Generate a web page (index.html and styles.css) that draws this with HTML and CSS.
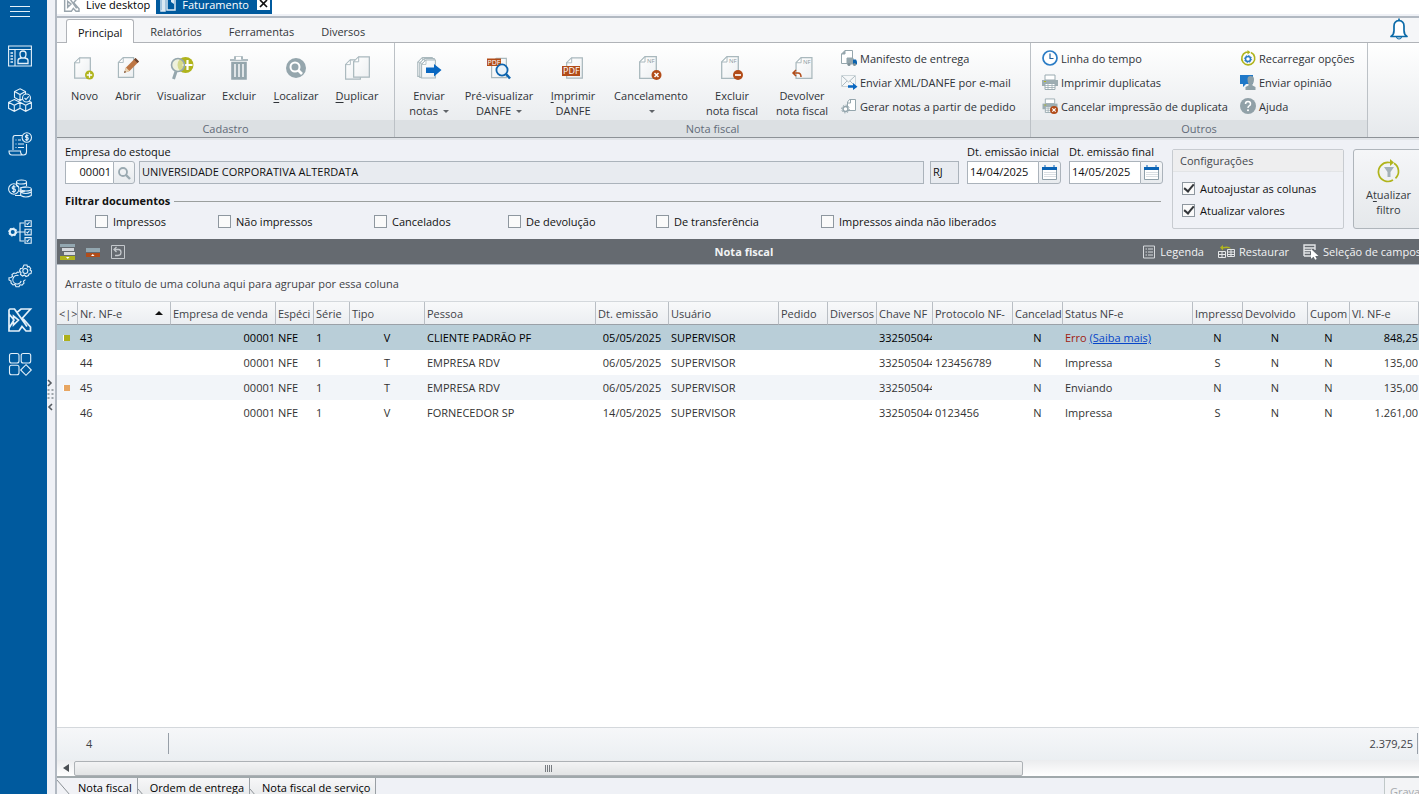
FILE: index.html
```html
<!DOCTYPE html>
<html lang="pt-BR">
<head>
<meta charset="utf-8">
<title>Faturamento</title>
<link rel="stylesheet" href="styles.css">
</head>
<body>
<svg class="defs" aria-hidden="true">
  <defs>
    <linearGradient id="sheet" x1="0" y1="0" x2="1" y2="1"><stop offset="0" stop-color="#fff"/><stop offset="1" stop-color="#eceff1"/></linearGradient>
    <symbol id="page" viewBox="0 0 18 23"><path d="M6 .7H17.3V22.3H.7V6z" fill="url(#sheet)" stroke="#a9b8bd" stroke-width="1.3"/><path d="M6 .7V6H.7z" fill="#fff" stroke="#a9b8bd"/></symbol>
    <symbol id="calendar" viewBox="0 0 15 15"><path d="M.5 2.500h14v12H.5z" fill="#fff" stroke="#8fa0aa"/><path d="M0 2h15v3H0z" fill="#0a63b5"/><path d="M3 0v2M12 0v2" stroke="#0a63b5" stroke-width="1"/><path d="M2.500 7.500h11M2.500 9.500h11M2.500 11.500h11" stroke="#b5bfc6" stroke-dasharray="1 1"/></symbol>
    <symbol id="printer" viewBox="0 0 16 16"><path d="M3 1h10v5H3z" fill="#fff" stroke="#9aabb1"/><path d="M0 6h16v6H0z" fill="#9dadb2"/><path d="M3 9.500h10v6H3z" fill="#fff" stroke="#9aabb1"/><path d="M3 11.500h10M3 13.500h10M6 10v5M10 10v5" stroke="#9aabb1" stroke-width=".8"/><path d="M2 7h2v1H2z" fill="#b0b41c"/></symbol>
  </defs>
</svg>
<div class="app">
  <nav class="sidebar" aria-label="Módulos">
    <button class="side-btn menu" aria-label="Menu"><svg width="20" height="12" viewBox="0 0 20 12"><path d="M0 .5h20M0 5.500h20M0 10.500h20"/></svg></button>
    <button class="side-btn" aria-label="Clientes"><svg width="24" height="24" viewBox="0 0 24 24"><path d="M.6 2h22.800v20H.6zM.6 5.500h22.800M7 6v16"/><path d="M2.500 9h2.500M2.500 12h2.500M2.500 15h2.500M2.500 18h2.500M10 19.500v-3q0-2 3-2.500h4q3 .5 3 2.500v3zM12 10q0-3 3-3t3 3q0 4-3 4t-3-4z" stroke-width="1.300"/></svg></button>
    <button class="side-btn" aria-label="Estoque"><svg width="24" height="24" viewBox="0 0 24 24"><path d="M12 .8l5.500 2.700v6L12 12.500 6.500 9.500v-6zM6.500 3.500L12 6.500l5.500-3M12 6.500v6M6.300 11.500l5.700 2.800v6l-5.700 3-5.700-3v-6zM.6 14.300l5.700 3 5.700-3M6.300 17.300v6M17.700 11.500l5.700 2.800v6l-5.700 3-5.700-3M12 14.300l5.700 3 5.700-3M17.700 17.300v6"/><circle cx="18.500" cy="10" r="4" fill="#005a9e"/><path d="M16.500 10l1.500 1.500 2.800-3.200"/></svg></button>
    <button class="side-btn" aria-label="Notas"><svg width="24" height="24" viewBox="0 0 24 24"><path d="M14 3.500H7q-2 0-2 2.500v12M18.500 12v8q0 3-3 3H4q-3 0-3-4h11.500q0 4 3 4"/><circle cx="18.800" cy="5.500" r="4.700"/><path d="M20.500 3.800q-3-1-3 .5t1.500 1.200 1.200 1.500-3 .5M18.800 2v7M7.500 8h1M10 8h3M7.500 12h1M10 12h6M7.500 15.500h1M10 15.500h6"/></svg></button>
    <button class="side-btn" aria-label="Financeiro"><svg width="24" height="24" viewBox="0 0 24 24"><circle cx="5.800" cy="13" r="5.200"/><path d="M7.500 11q-3-1-3.300.4t1.700 1.500 1.400 2-3.300.4M5.800 9v8"/><ellipse cx="13.500" cy="6" rx="5" ry="2"/><path d="M8.500 6v3M18.500 6v4M12 12q2-1 6.500-1M11 15q3 1 6 0"/><ellipse cx="18" cy="13" rx="5.300" ry="2"/><path d="M12.700 13v6.500q5 3 10.600 0V13M12.700 16q5 3 10.600 0M11 11q-3-1-2.500-2M7 19.500h6"/></svg></button>
    <button class="side-btn" aria-label="Processos"><svg width="24" height="24" viewBox="0 0 24 24"><circle cx="4.700" cy="12" r="3" stroke-width="2"/><circle cx="4.700" cy="12" r="4" stroke-dasharray="1.500 1.600"/><path d="M9 12h8M16 3h-4v18h4"/><path d="M17 .8h6.200v5.700H17zM17 9.200h6.200v5.700H17zM17 17.600h6.200v5.700H17zM18.500 3.500l1 1 2-2.500M18.500 12l1 1 2-2.500M18.500 20.500l1 1 2-2.500"/></svg></button>
    <button class="side-btn" aria-label="Configurações"><svg width="24" height="24" viewBox="0 0 24 24"><path d="M16 1h3l.5 2 1.500-.5 1.700 2L22 6l1.500 1-.5 2.500-2 .5-.5 1.500-2.500 1-1.500-1.500-2 1-2-1.500.5-2-1.500-1.500 1-2.500 2-.3z"/><circle cx="17.300" cy="7" r="2.500"/><path d="M11.500 8.500L9.500 8 8 9.500 6 9 4 10.500l.5 2-1.500 1-2 .3V16l2 1v2l2 2 2-.5 1 2.300h3l1-2 2 .3 2-2-.5-2 2-1.500" /><path d="M10.500 11.500a4.300 4.300 0 1 0 2.700 5.500"/></svg></button>
    <button class="side-btn" aria-label="Live desktop"><svg width="24" height="24" viewBox="0 0 24 24"><path d="M2 1h4.500l2.500 3.500L13 1h9.500l-8 9 8 9v4H18l-4-4.500-3 4.500H1V2zM1 6l5 6-5 8M5.500 8v9l5-5zM9 4.500l10 14" stroke-width="1.700"/></svg></button>
    <button class="side-btn" aria-label="Aplicativos"><svg width="24" height="24" viewBox="0 0 24 24"><rect x="1.500" y="1.500" width="9.500" height="9.500" rx="2"/><rect x="13.200" y="1.500" width="9.500" height="9.500" rx="2"/><rect x="1.500" y="13.200" width="9.500" height="9.500" rx="2"/><path d="M18 12.700l5.300 5.300-5.300 5.300-5.300-5.300z"/></svg></button>
  </nav>

  <div class="splitter" aria-hidden="true"><svg width="7" height="34" viewBox="0 0 7 34"><path d="M1 2l3 3-3 3M5 26l-3 3 3 3" fill="none" stroke="#555a60" stroke-width="1.600"/><path d="M1.500 11v12M5.500 11v12" stroke="#9ea5aa" stroke-width="2" stroke-dasharray="2 2"/></svg></div>

  <main class="main">
    <header class="windows">
      <button class="win"><svg width="16" height="16" viewBox="0 0 24 24"><path d="M2 1h5l2 3.500L13 1h9l-7.500 9 8 9v4H18l-4-4.500-3 4.500H1V2zM5.500 8v9l5-5zM9 4.500l10 14" fill="none" stroke="#9aa5ad" stroke-width="2.200"/></svg>Live desktop</button>
      <button class="win current"><svg width="16" height="16" viewBox="0 0 16 16"><path d="M1 0v15h4V1M7 14V4q0-2 2-2h6v12z" fill="none" stroke="#dbe9f3" stroke-width="1.500"/><path d="M2 3h3v12H2zM11 1v5l3 2V1z" fill="#dbe9f3"/></svg>Faturamento</button>
      <button class="win-close" aria-label="Fechar Faturamento"><svg width="13" height="13" viewBox="0 0 13 13"><path d="M3 3l7 7M10 3l-7 7" stroke="#111" stroke-width="1.700"/></svg></button>
    </header>

    <nav class="ribbon-tabs">
      <button class="rtab active">Principal</button>
      <button class="rtab">Relatórios</button>
      <button class="rtab">Ferramentas</button>
      <button class="rtab">Diversos</button>
      <button class="bell" aria-label="Notificações"><svg width="18" height="22" viewBox="0 0 18 22"><path d="M9 .5v2M1 18.500q3-2 3-6V8q0-5 5-5.500Q14 3 14 8v4.500q0 4 3 6z" fill="#fff" stroke="#0b6aa8" stroke-width="1.700" stroke-linejoin="round"/><path d="M6.500 19q0 2 2.500 2t2.500-2z" fill="#fff" stroke="#0b6aa8"/></svg></button>
    </nav>

    <section class="ribbon">
      <div class="group">
        <div class="group-body first">
          <button class="big"><svg width="24" height="24" viewBox="0 0 24 24"><use href="#page" x="1" y="1" width="17" height="22"/><circle cx="16.500" cy="19" r="4.500" fill="#b0b41c"/><path d="M16.500 16.300v5.400M13.800 19h5.400" stroke="#fff" stroke-width="1.300"/></svg><span>Novo</span></button>
          <button class="big"><svg width="24" height="24" viewBox="0 0 24 24"><use href="#page" x="1" y="1" width="18" height="21"/><path d="M8 17l2-5.500L19.500 2 23 5.500 13.500 15z" fill="#bd7644"/><path d="M8 17l2-5.500 3.500 3.500z" fill="#ead3b1"/><path d="M8 17l.8-2.200 1.300 1.300zM18 3.500L19.500 2 23 5.500 21.500 7z" fill="#6b4430"/></svg><span>Abrir</span></button>
          <button class="big"><svg width="24" height="24" viewBox="0 0 24 24"><circle cx="15.500" cy="9" r="8" fill="#b0b41c"/><path d="M17.500 4v10M12.500 9h10" stroke="#fff" stroke-width="2.200"/><circle cx="8" cy="9" r="6.500" fill="#e9eccb" fill-opacity=".65" stroke="#95a6ad" stroke-width="1.600"/><path d="M6 15.500L3.500 23" stroke="#95a6ad" stroke-width="3"/></svg><span>Visualizar</span></button>
          <button class="big"><svg width="24" height="24" viewBox="0 0 24 24"><path d="M8 3V1h7v2M3 4h18M5 6.500h14V23H5z" fill="#95a6ad" stroke="#95a6ad" stroke-width="1.600"/><path d="M9.500 1.500h4V3h-4zM8 8v13M12 8v13M16 8v13" stroke="#fff" stroke-width="1.400"/></svg><span>Excluir</span></button>
          <button class="big"><svg width="24" height="24" viewBox="0 0 24 24"><circle cx="12" cy="12" r="10" fill="#95a6ad"/><circle cx="11" cy="11" r="4.500" fill="none" stroke="#fff" stroke-width="2"/><path d="M14 14l4 4" stroke="#fff" stroke-width="2.600"/></svg><span><u>L</u>ocalizar</span></button>
          <button class="big"><svg width="24" height="24" viewBox="0 0 24 24"><use href="#page" x="0" y="3" width="16" height="21"/><use href="#page" x="8" y="0" width="17" height="22"/></svg><span><u>D</u>uplicar</span></button>
        </div>
        <h2 class="group-title">Cadastro</h2>
      </div>
      <div class="group">
        <div class="group-body second">
          <button class="big"><svg width="24" height="24" viewBox="0 0 24 24"><use href="#page" x="0" y="1" width="16" height="20"/><use href="#page" x="2" y="2" width="16" height="20"/><use href="#page" x="4" y="3" width="15" height="20"/><path d="M9 11.500h8V8l7.500 6-7.500 6.500V17H9z" fill="#0967c1"/></svg><span>Enviar<br>notas <i class="caret"></i></span></button>
          <button class="big"><svg width="24" height="24" viewBox="0 0 24 24"><use href="#page" x="4" y="1" width="16" height="22"/><path d="M0 2.500h14V10H0z" fill="#b24c19"/><text x="0.500" y="9" font-size="7" fill="#fff">PDF</text><circle cx="15" cy="14" r="5.600" fill="#e8f2fa" fill-opacity=".9" stroke="#0b63ae" stroke-width="1.800"/><path d="M19 18l4 4.500" stroke="#0b63ae" stroke-width="2.500"/></svg><span>Pré-visualizar<br>DANFE <i class="caret"></i></span></button>
          <button class="big"><svg width="24" height="24" viewBox="0 0 24 24"><use href="#page" x="5" y="1" width="17" height="22"/><path d="M1 10h18v10H1z" fill="#b24c19"/><text x="2" y="18" font-size="9" fill="#fff">PDF</text></svg><span><u>I</u>mprimir<br>DANFE</span></button>
          <button class="big"><svg width="24" height="24" viewBox="0 0 24 24"><use href="#page" x="0" y="0" width="18" height="23"/><text x="8" y="7" font-size="6" fill="#8d9aa1">NF</text><circle cx="17.500" cy="19" r="5" fill="#b24c19"/><path d="M15.500 17l4 4M19.500 17l-4 4" stroke="#fff" stroke-width="1.500"/></svg><span>Cancelamento<br><i class="caret"></i></span></button>
          <button class="big"><svg width="24" height="24" viewBox="0 0 24 24"><use href="#page" x="1" y="0" width="18" height="23"/><text x="9" y="7" font-size="6" fill="#8d9aa1">NF</text><circle cx="18" cy="19" r="5" fill="#b24c19"/><path d="M15 19h6" stroke="#fff" stroke-width="1.700"/></svg><span>Excluir<br>nota fiscal</span></button>
          <button class="big"><svg width="24" height="24" viewBox="0 0 24 24"><use href="#page" x="5" y="1" width="18" height="22"/><text x="13" y="8" font-size="6" fill="#8d9aa1">NF</text><path d="M6 14l-3 3 3 3M3 17h5q3 0 3 4" fill="none" stroke="#b24c19" stroke-width="1.500"/></svg><span>Devolver<br>nota fiscal</span></button>
          <div class="stack">
            <button class="small"><svg width="16" height="16" viewBox="0 0 16 16"><path d="M4 .5h7.500v13H.5V4z" fill="#fff" stroke="#95a6ad"/><path d="M4 .5V4H.5M6 8h6v6H6z" fill="#95a6ad" stroke="#95a6ad"/><path d="M12 9.500h3l1 2v3h-4z" fill="#0b63ae"/><circle cx="8" cy="14.500" r="1.500" fill="#7f9097"/><circle cx="13.500" cy="14.500" r="1.500" fill="#7f9097"/></svg>Manifesto de entrega</button>
            <button class="small"><svg width="16" height="16" viewBox="0 0 16 16"><path d="M.5 1.500h14v11H.5z" fill="#f5f7f8" stroke="#ccd5d9"/><path d="M1 2l6.500 6L14 2M1 12l5-5M14 12L9 7" fill="none" stroke="#aebbc1"/><path d="M7 11.300h5V9l4.500 3.700L12 16v-2.300H7z" fill="#0967c1"/></svg>Enviar XML/DANFE por e-mail</button>
            <button class="small"><svg width="16" height="16" viewBox="0 0 16 16"><path d="M8.500 1.500h6v11h-8V4z" fill="#fff" stroke="#95a6ad"/><path d="M9.500 1.500V5h-3" fill="none" stroke="#95a6ad"/><circle cx="4.500" cy="11" r="2.500" fill="#fff" stroke="#95a6ad" stroke-width="1.500"/><circle cx="4.500" cy="11" r="3.900" fill="none" stroke="#95a6ad" stroke-dasharray="1.500 1.500"/></svg>Gerar notas a partir de pedido</button>
          </div>
        </div>
        <h2 class="group-title">Nota fiscal</h2>
      </div>
      <div class="group">
        <div class="group-body third">
          <div class="stack">
            <button class="small"><svg width="16" height="16" viewBox="0 0 16 16"><circle cx="8" cy="8" r="7" fill="#fff" stroke="#2b7cc5" stroke-width="1.700"/><path d="M8 3.500V8.500h3.500" fill="none" stroke="#1e609e" stroke-width="1.200"/></svg>Linha do tempo</button>
            <button class="small"><svg width="16" height="16"><use href="#printer"/></svg>Imprimir duplicatas</button>
            <button class="small"><svg width="16" height="16" viewBox="0 0 16 16"><use href="#printer" width="16" height="15"/><circle cx="12" cy="12" r="4" fill="#b24c19"/><path d="M10.300 10.300l3.400 3.400M13.700 10.300l-3.400 3.400" stroke="#fff" stroke-width="1.200"/></svg>Cancelar impressão de duplicata</button>
          </div>
          <div class="stack">
            <button class="small"><svg width="16" height="16" viewBox="0 0 16 16"><path d="M11 2.500a6.500 6.500 0 1 1-5-.2h3" fill="none" stroke="#b0b41c" stroke-width="1.600"/><path d="M7.500 0l3 2.300-3 2.300z" fill="#b0b41c"/><circle cx="8" cy="9" r="2.500" fill="#fff" stroke="#2b7cc5" stroke-width="1.500"/><circle cx="8" cy="9" r="3.600" fill="none" stroke="#2b7cc5" stroke-dasharray="1.300 1.500"/></svg>Recarregar opções</button>
            <button class="small"><svg width="16" height="16" viewBox="0 0 16 16"><path d="M0 1h13v9H6l-3 3v-3H0z" fill="#1f78c8"/><path d="M7.500 5q0-3 3.200-3T14 5q0 4-1.500 5v1.500l3 1.500v3h-10v-3l3-1.500V10Q7.500 9 7.500 5z" fill="#8da0a8"/></svg>Enviar opinião</button>
            <button class="small"><svg width="16" height="16" viewBox="0 0 16 16"><circle cx="8" cy="8" r="8" fill="#91a1a8"/><path d="M5.500 6q0-2.500 2.500-2.500T10.500 6q0 1.200-1.300 1.900T8 10" fill="none" stroke="#fff" stroke-width="1.500"/><circle cx="8" cy="12.300" r="1" fill="#fff"/></svg>Ajuda</button>
          </div>
        </div>
        <h2 class="group-title">Outros</h2>
      </div>
    </section>

    <section class="filters">
      <div class="fields">
        <div class="field-row">
          <div class="field">
            <label for="code">Empresa do estoque</label>
            <div class="combo code"><input id="code" type="text" value="00001"><button aria-label="Pesquisar empresa"><svg width="14" height="14" viewBox="0 0 14 14"><circle cx="6" cy="6" r="4" fill="none" stroke="#9aa9b1" stroke-width="1.800"/><path d="M9 9l4 4" stroke="#9aa9b1" stroke-width="2.400"/></svg></button></div>
          </div>
          <input class="readonly name" type="text" value="UNIVERSIDADE CORPORATIVA ALTERDATA" aria-label="Nome da empresa" readonly>
          <input class="readonly uf" type="text" value="RJ" aria-label="UF" readonly>
          <div class="field">
            <label for="from">Dt. emissão inicial</label>
            <div class="combo date"><input id="from" type="text" value="14/04/2025"><button aria-label="Abrir calendário inicial"><svg width="15" height="15"><use href="#calendar"/></svg></button></div>
          </div>
          <div class="field">
            <label for="to">Dt. emissão final</label>
            <div class="combo date"><input id="to" type="text" value="14/05/2025"><button aria-label="Abrir calendário final"><svg width="15" height="15"><use href="#calendar"/></svg></button></div>
          </div>
        </div>
        <fieldset class="docs">
          <legend>Filtrar documentos</legend>
          <label class="check"><input type="checkbox">Impressos</label>
          <label class="check"><input type="checkbox">Não impressos</label>
          <label class="check"><input type="checkbox">Cancelados</label>
          <label class="check"><input type="checkbox">De devolução</label>
          <label class="check"><input type="checkbox">De transferência</label>
          <label class="check"><input type="checkbox">Impressos ainda não liberados</label>
        </fieldset>
      </div>
      <div class="config">
        <h3>Configurações</h3>
        <label class="check"><input type="checkbox" checked>Autoajustar as colunas</label>
        <label class="check"><input type="checkbox" checked>Atualizar valores</label>
      </div>
      <button class="refresh"><svg width="24" height="24" viewBox="0 0 24 24"><path d="M17 4.300a9.500 9.500 0 0 1 1.500 15M16 21a9.500 9.500 0 1 1-4-17.500h3" fill="none" stroke="#b0b41c" stroke-width="1.700"/><path d="M13 0l4 3.500-4 3.500z" fill="#b0b41c"/><path d="M7 8h10l-3.500 5v5h-3v-5z" fill="#a4b1b7"/></svg><span>A<u>t</u>ualizar<br>filtro</span></button>
    </section>

    <div class="grid-bar">
      <div class="bar-left">
        <button aria-label="Expandir"><svg width="16" height="16" viewBox="0 0 16 16"><path d="M0 0h15v3H0z" fill="#93a7b0"/><path d="M2 4h12v3H2zM4 8h11v3H4z" fill="#d5d8dc"/><path d="M0 12h15v4H0z" fill="#b0b41c"/><path d="M6 13h3.500L7.800 15z" fill="#fff"/></svg></button>
        <button aria-label="Recolher"><svg width="16" height="16" viewBox="0 0 16 16"><path d="M1 4h14v4H1z" fill="#93a7b0"/><path d="M1 9h14v4H1z" fill="#b24c19"/><path d="M6 12h3.500L7.800 10z" fill="#fff"/></svg></button>
        <button aria-label="Desfazer"><svg width="16" height="16" viewBox="0 0 16 16"><path d="M1.500 1.500h13v13h-13z" fill="none" stroke="#c4c8cc"/><path d="M6.500 3L4 5.500 6.500 8M4 5.500h4.500q2.500 0 2.500 3T8 11.500H5" fill="none" stroke="#c4c8cc" stroke-width="1.300"/></svg></button>
      </div>
      <h2>Nota fiscal</h2>
      <div class="bar-right">
        <button><svg width="14" height="14" viewBox="0 0 14 14"><path d="M1.500 1h11v12h-11z" fill="none" stroke="#d6d9dc"/><path d="M3.500 4h1.500M6 4h5M3.500 7h1.500M6 7h5M3.500 10h1.500M6 10h5" stroke="#d6d9dc"/></svg>Legenda</button>
        <button><svg width="17" height="14" viewBox="0 0 17 14"><path d="M.5 6.500h7v6h-7zM.5 9.500h7M4 6.500v6M9.500 4.500h7v7h-7zM9.500 7h7M9.500 9.500h7M13 4.500v7" fill="none" stroke="#e4e6e8"/><path d="M2 2.500L5 0v2q6-1.500 8 1.500-4-1-8 0v2z" fill="#b0b41c"/></svg>Restaurar</button>
        <button><svg width="16" height="16" viewBox="0 0 16 16"><path d="M1 1h11v3H1zM1 6.500h8M1 9h6M1 12h8M1 1v11M12 1v5" fill="none" stroke="#e4e6e8" stroke-width="1.400"/><path d="M8 5l7.500 7h-3.300l1.500 3-1.600.8-1.500-3L8 14.800z" fill="#fff"/></svg>Seleção de campos</button>
      </div>
    </div>

    <p class="group-hint">Arraste o título de uma coluna aqui para agrupar por essa coluna</p>

    <div class="grid-area">
      <table class="grid">
        <colgroup>
          <col class="w-flag"><col class="w-nr"><col class="w-emp"><col class="w-esp"><col class="w-serie"><col class="w-tipo"><col class="w-pessoa"><col class="w-dt"><col class="w-user"><col class="w-49"><col class="w-49"><col class="w-chave"><col class="w-prot"><col class="w-50"><col class="w-status"><col class="w-50"><col class="w-dev"><col class="w-cupom"><col>
        </colgroup>
        <thead>
          <tr><th>&lt;|&gt;</th><th><span class="sorted">Nr. NF-e</span></th><th>Empresa de venda</th><th>Espéci</th><th>Série</th><th>Tipo</th><th>Pessoa</th><th>Dt. emissão</th><th>Usuário</th><th>Pedido</th><th>Diversos</th><th>Chave NF</th><th>Protocolo NF-</th><th>Cancelad</th><th>Status NF-e</th><th>Impresso</th><th>Devolvido</th><th>Cupom</th><th>Vl. NF-e</th></tr>
        </thead>
        <tbody>
          <tr class="selected"><td><i class="flag green"></i></td><td>43</td><td class="r">00001</td><td>NFE</td><td>1</td><td class="c">V</td><td>CLIENTE PADRÃO PF</td><td class="c">05/05/2025</td><td>SUPERVISOR</td><td></td><td></td><td>332505044</td><td></td><td class="c">N</td><td><span class="error">Erro</span> <a href="#">(Saiba mais)</a></td><td class="c">N</td><td class="c">N</td><td class="c">N</td><td class="r">848,25</td></tr>
          <tr><td></td><td>44</td><td class="r">00001</td><td>NFE</td><td>1</td><td class="c">T</td><td>EMPRESA RDV</td><td class="c">06/05/2025</td><td>SUPERVISOR</td><td></td><td></td><td>332505044</td><td>123456789</td><td class="c">N</td><td>Impressa</td><td class="c">S</td><td class="c">N</td><td class="c">N</td><td class="r">135,00</td></tr>
          <tr class="alt"><td><i class="flag orange"></i></td><td>45</td><td class="r">00001</td><td>NFE</td><td>1</td><td class="c">T</td><td>EMPRESA RDV</td><td class="c">06/05/2025</td><td>SUPERVISOR</td><td></td><td></td><td>332505044</td><td></td><td class="c">N</td><td>Enviando</td><td class="c">N</td><td class="c">N</td><td class="c">N</td><td class="r">135,00</td></tr>
          <tr><td></td><td>46</td><td class="r">00001</td><td>NFE</td><td>1</td><td class="c">V</td><td>FORNECEDOR SP</td><td class="c">14/05/2025</td><td>SUPERVISOR</td><td></td><td></td><td>332505044</td><td>0123456</td><td class="c">N</td><td>Impressa</td><td class="c">S</td><td class="c">N</td><td class="c">N</td><td class="r">1.261,00</td></tr>
        </tbody>
      </table>
    </div>

    <div class="totals"><span class="count">4</span><span class="sum">2.379,25</span></div>
    <div class="scroll" aria-hidden="true"><i class="arrow"></i><div class="thumb"><i></i></div></div>

    <footer class="bottom">
      <button class="btab active"><svg width="13" height="15" viewBox="0 0 13 15"><path d="M0 0l13 15"/></svg>Nota fiscal</button>
      <button class="btab"><svg width="7" height="15" viewBox="0 0 7 15"><path d="M0 9l6 7"/></svg>Ordem de entrega</button>
      <button class="btab"><svg width="7" height="15" viewBox="0 0 7 15"><path d="M0 9l6 7"/></svg>Nota fiscal de serviço</button>
      <button class="save" disabled>Gravar</button>
    </footer>
  </main>
</div>
</body>
</html>
```
FILE: styles.css
```css
* { box-sizing: border-box; }
body {
  margin: 0;
  font: 11px/15px "Open Sans", "Noto Sans", sans-serif;
  color: #111;
  background: #eff1f6;
  overflow: hidden;
}
button, input { font: inherit; color: inherit; }
button { margin: 0; padding: 0; border: 0; background: none; }
h2, h3, p { margin: 0; font: inherit; }
svg { flex: none; overflow: visible; }
.defs { position: absolute; width: 0; height: 0; }
u { text-underline-offset: 2px; }

.app { display: flex; height: 100vh; }

.sidebar { flex: none; width: 47px; padding-right: 7px; background: #005a9e; overflow: hidden; }
.side-btn { display: flex; align-items: center; justify-content: center; width: 100%; height: 44px; }
.side-btn svg { fill: none; stroke: #e3f0f9; stroke-width: 1.1; }
.side-btn.menu { height: 34px; padding-bottom: 10px; }

.splitter { flex: none; display: flex; align-items: center; width: 8px; padding-bottom: 5px; }

.main { flex: 1; min-width: 0; display: flex; flex-direction: column; border-left: 2px solid #b2b9c2; overflow: hidden; }

.windows { flex: none; display: flex; align-items: flex-end; height: 14px; padding-left: 7px; background: #fff; color: #000; }
.win { display: flex; align-items: center; gap: 6px; height: 20px; padding-right: 6px; }
.win.current { padding: 0 8px 0 4px; background: #005a9e; color: #fff; }
.win-close { height: 20px; padding: 3px 2px 4px 0; background: #005a9e; }
.win-close svg { display: block; background: #fff; }

.ribbon-tabs { flex: none; display: flex; align-items: flex-end; gap: 1px; height: 29px; padding-left: 9px; border-top: 2px solid #eff1f6; background: linear-gradient(#b2b9c2 2px, #f5f6f8 2px); border-bottom: 1px solid #b0b3b8; color: #33363b; }
.rtab { height: 22px; padding: 0 13px; }
.rtab.active { height: 24px; margin-bottom: -1px; margin-right: 2px; padding: 1px 11px 0; border: 1px solid #b0b3b8; border-bottom: 0; border-radius: 3px 3px 0 0; background: #fff; color: #111; }
.bell { margin: 0 11px 2px auto; }
.bell svg { display: block; }

.ribbon { flex: none; display: flex; height: 95px; border-bottom: 1px solid #8d9297; background: linear-gradient(#fff, #e6e9ec); color: #2f3338; }
.group { display: flex; flex-direction: column; border-right: 1px solid #bcc1c6; }
.group-body { flex: 1; display: grid; padding-left: 6px; }
.first { grid-template-columns: 43px 44px 63px 52px 62px 60px; padding-right: 7px; }
.second { grid-template-columns: 58px 82px 66px 90px 72px 68px 194px; padding-left: 5px; }
.third { grid-template-columns: 198px 127px; padding-left: 11px; }
.group-title { height: 17px; line-height: 17px; text-align: center; background: #dce0e3; color: #626b78; }
.big { display: flex; flex-direction: column; align-items: center; gap: 8px; padding-top: 13px; white-space: nowrap; }
.caret { display: inline-block; margin: 0 0 2px 2px; border: 3px solid transparent; border-top-color: #606469; border-bottom: 0; }
.stack { display: grid; grid-template-rows: repeat(3, 24px); padding: 3px 0 0 5px; white-space: nowrap; }
.third .stack { padding-left: 0; }
.small { display: flex; align-items: center; gap: 3px; text-align: left; }

.filters { flex: none; display: grid; grid-template-columns: 1fr 172px 75px; height: 101px; padding: 10px 0 10px 8px; border-top: 2px solid #e2e5e9; }
.fields { display: flex; flex-direction: column; }
.field-row { display: flex; align-items: flex-end; gap: 6px; padding-right: 9px; height: 34px; }
.field { width: 70px; display: flex; flex-direction: column; gap: 1px; white-space: nowrap; }
.field:nth-last-child(-n+2) { width: 94px; margin-left: 2px; }
.field label { line-height: 16px; }
.combo { display: flex; }
.combo input { width: 48px; height: 23px; padding: 0 2px 2px; border: 1px solid #abb3bb; border-right: 0; background: #fff; text-align: right; }
.combo.date input { width: 71px; text-align: left; }
.combo button { display: flex; align-items: center; justify-content: center; width: 23px; height: 23px; border: 1px solid #abb3bb; border-radius: 0 3px 3px 0; background: linear-gradient(#f6f7f9, #e8ebee); }
.readonly { height: 23px; border: 1px solid #abb3bb; padding: 0 2px 2px; background: #e8ebf0; }
.name { flex: 1; min-width: 0; margin-left: -2px; }
.uf { width: 29px; }
.docs { display: grid; grid-template-columns: 123px 156px 134px 148px 165px auto; align-items: center; min-width: 0; margin: 9px 11px 0 0; padding: 6px 0 0 30px; border: 0; background: linear-gradient(#9b9f9e, #9b9f9e) 0 0 / 100% 1px no-repeat; }
.docs legend { margin-left: -30px; padding: 0 4px 0 0; font-weight: 700; background: #eff1f6; }
.check { display: flex; align-items: center; gap: 5px; white-space: nowrap; }
.check input { appearance: none; display: grid; place-items: center; width: 13px; height: 13px; margin: 0; border: 1px solid #8e979f; background: #fafafa; }
.check input:checked::after { content: ""; width: 4px; height: 8px; margin-top: -2px; border: solid #33363a; border-width: 0 2px 2px 0; transform: rotate(40deg); }
.config { height: 80px; margin-top: -1px; border: 1px solid #c7cbd0; border-radius: 2px; }
.config h3 { height: 22px; padding: 3px 7px; background: #eeeeef; border-bottom: 1px solid #e2e4e6; color: #44484e; }
.config .check { height: 22px; padding-left: 9px; }
.config h3 + .check { margin-top: 5px; }
.refresh { display: flex; flex-direction: column; align-items: center; gap: 4px; width: 71px; height: 80px; margin: -1px 0 0 9px; padding-top: 9px; border: 1px solid #afb5bb; border-radius: 3px; background: linear-gradient(#f5f6f8, #e5e8eb); color: #373b40; }

.grid-bar { flex: none; display: grid; grid-template-columns: 1fr auto 1fr; align-items: center; height: 26px; margin-right: -12px; border-bottom: 1px solid #b2b9c2; background: #656a70; color: #f2f3f4; white-space: nowrap; }
.grid-bar h2 { font-weight: 700; }
.grid-bar button { display: flex; align-items: center; gap: 4px; }
.bar-left { display: flex; gap: 9px; padding-left: 3px; }
.bar-right { display: flex; justify-content: flex-end; gap: 14px; padding-right: 10px; }

.group-hint { flex: none; height: 37px; padding: 11px 8px; background: #f5f6f8; border-bottom: 1px solid #d4d8dc; color: #3f4247; }

.grid-area { flex: 1; min-height: 0; overflow: hidden; background: #fff; }
.grid { width: 100%; table-layout: fixed; border-collapse: separate; border-spacing: 0; color: #333; }
.grid th, .grid td { padding: 0 2px; overflow: hidden; white-space: nowrap; text-align: left; font-weight: 400; }
.grid th { height: 23px; border-right: 1px solid #b9bec4; border-bottom: 1px solid #9ba1a8; background: linear-gradient(#f8f9fa, #ebeef1); color: #3f4247; }
.grid td { height: 25px; border-right: 1px solid transparent; }
.grid td.r { text-align: right; padding-right: 0; }
.grid td.c { text-align: center; }
.grid .selected { background: #b9ced8; color: #000; }
.grid .alt { background: #f2f5f9; }
.sorted { display: flex; justify-content: space-between; align-items: center; padding-right: 5px; }
.sorted::after { content: ""; border: 4px solid transparent; border-bottom-color: #111; border-top: 0; }
.flag { display: block; width: 7px; height: 6px; margin-left: 4px; border-left: 1px solid #fff; }
.green { background: #adb01c; }
.orange { background: #e8a662; }
.error { color: #a01c10; }
.grid a { color: #0645c8; }
.w-flag { width: 21px; }
.w-nr { width: 93px; }
.w-emp { width: 105px; }
.w-esp { width: 38px; }
.w-serie { width: 36px; }
.w-tipo { width: 75px; }
.w-pessoa { width: 171px; }
.w-dt { width: 73px; }
.w-user { width: 110px; }
.w-49 { width: 49px; }
.w-chave { width: 56px; }
.w-prot { width: 80px; }
.w-50 { width: 50px; }
.w-status { width: 130px; }
.w-dev { width: 65px; }
.w-cupom { width: 42px; }

.totals { flex: none; display: flex; justify-content: space-between; align-items: center; height: 33px; padding: 0 1px 2px 0; border-top: 1px solid #d4d8dc; background: linear-gradient(#f6f7f9, #ebeff2); color: #3f4247; }
.count, .sum { line-height: 21px; border-right: 1px solid #979fa8; }
.count { width: 112px; padding-left: 29px; }
.sum { padding-right: 4px; }
.scroll { flex: none; display: flex; align-items: center; height: 18px; gap: 5px; padding-left: 6px; border-bottom: 2px solid #a0a8ab; background: linear-gradient(#ebecee, #fff); }
.arrow { border: 4px solid transparent; border-right: 6px solid #4b4f53; border-left: 0; }
.thumb { display: flex; align-items: center; justify-content: center; width: 70%; height: 15px; border: 1px solid #adb1b5; border-radius: 2px; background: linear-gradient(#f3f3f4, #e2e4e5); }
.thumb i { width: 8px; height: 7px; background: repeating-linear-gradient(90deg, #777b80 0 1px, transparent 1px 2px); }

.bottom { flex: none; display: flex; height: 16px; overflow: hidden; color: #000; }
.btab { display: flex; align-items: center; gap: 5px; height: 18px; padding: 0 5px 0 0; border-right: 1px solid #999fa4; background: linear-gradient(#f7f7f8, #e8eaec); white-space: nowrap; }
.btab.active { gap: 8px; background: #f1f2f6; }
.btab svg { fill: none; stroke: #8b9095; }
.save { margin-left: auto; width: 35px; height: 22px; padding: 5px 0 0 5px; overflow: hidden; border-left: 1px solid #c0c8c8; background: #f3f4f6; color: #a5a9ad; text-align: left; }
```
